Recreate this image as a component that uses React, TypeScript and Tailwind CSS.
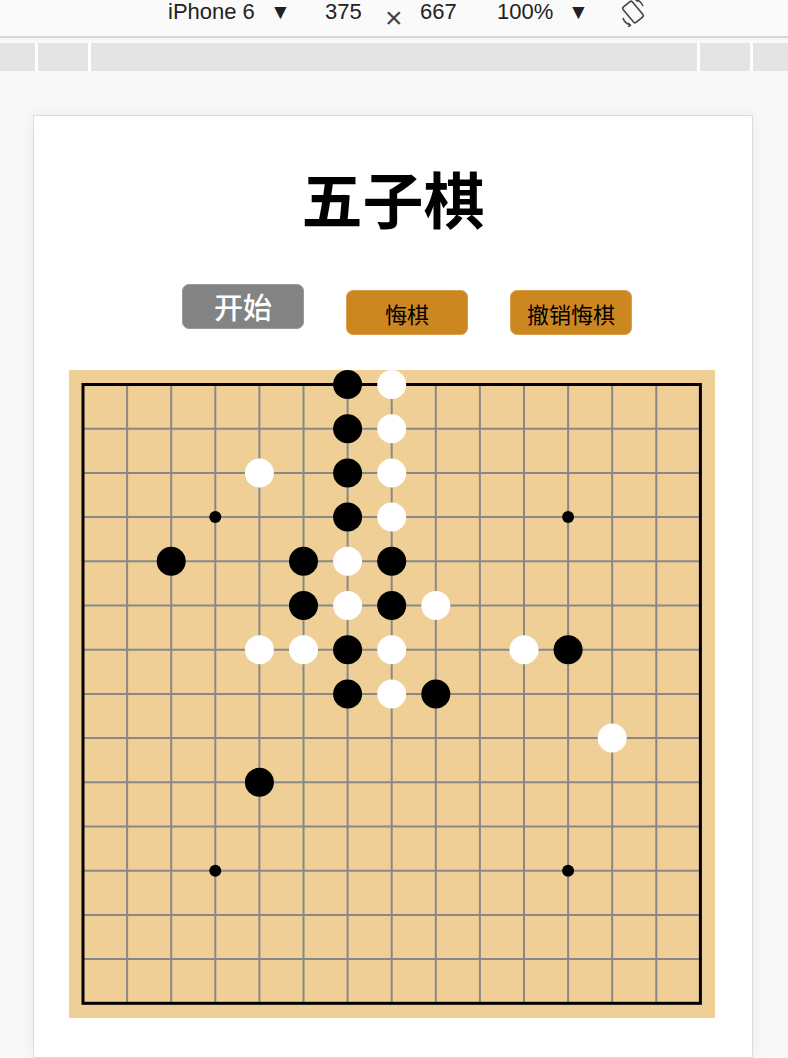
import React from 'react';

type Stone = [number, number, 'b' | 'w'];

// board geometry (px inside the svg)
const OX = 14;
const OY = 14.5;
const SX = 44.1;
const SY = 44.2;
const N = 15;

const stones: Stone[] = [
  [6, 0, 'b'], [7, 0, 'w'],
  [6, 1, 'b'], [7, 1, 'w'],
  [4, 2, 'w'], [6, 2, 'b'], [7, 2, 'w'],
  [6, 3, 'b'], [7, 3, 'w'],
  [2, 4, 'b'], [5, 4, 'b'], [6, 4, 'w'], [7, 4, 'b'],
  [5, 5, 'b'], [6, 5, 'w'], [7, 5, 'b'], [8, 5, 'w'],
  [4, 6, 'w'], [5, 6, 'w'], [6, 6, 'b'], [7, 6, 'w'], [10, 6, 'w'], [11, 6, 'b'],
  [6, 7, 'b'], [7, 7, 'w'], [8, 7, 'b'],
  [12, 8, 'w'],
  [4, 9, 'b'],
];

const stars: [number, number][] = [[3, 3], [11, 3], [3, 11], [11, 11]];

function RotateIcon() {
  return (
    <svg width="30" height="28" viewBox="0 0 30 28" fill="none" stroke="#444" strokeWidth="1.6">
      <rect x="9" y="3" width="12" height="20" rx="2" transform="rotate(-40 15 13)" />
      <path d="M5 19 A11 11 0 0 0 12 26" />
      <path d="M25 7 A11 11 0 0 0 18 0.5" />
      <path d="M10 24 L12.4 26.2 L10.2 28" />
      <path d="M20 2.5 L17.6 0.6 L19.6 -1" />
    </svg>
  );
}

function Board() {
  const w = 646;
  const h = 648;
  const right = OX + SX * (N - 1);
  const bottom = OY + SY * (N - 1);
  const idx = Array.from({ length: N }, (_, i) => i);
  return (
    <svg width={w} height={h} className="block bg-[#efcf96]">
      {idx.map((i) => (
        <line key={'v' + i} x1={OX + SX * i} y1={OY} x2={OX + SX * i} y2={bottom} stroke="#888" strokeWidth="2" />
      ))}
      {idx.map((i) => (
        <line key={'h' + i} x1={OX} y1={OY + SY * i} x2={right} y2={OY + SY * i} stroke="#888" strokeWidth="2" />
      ))}
      <rect x={OX} y={OY} width={right - OX} height={bottom - OY} fill="none" stroke="#000" strokeWidth="3" />
      {stars.map(([c, r]) => (
        <circle key={'s' + c + '-' + r} cx={OX + SX * c} cy={OY + SY * r} r="6" fill="#000" />
      ))}
      {stones.map(([c, r, color]) => (
        <circle
          key={c + '-' + r}
          cx={OX + SX * c}
          cy={OY + SY * r}
          r="14.5"
          fill={color === 'b' ? '#000' : '#fff'}
        />
      ))}
    </svg>
  );
}

export default function App() {
  return (
    <div className="w-[788px] h-[1058px] overflow-hidden flex flex-col bg-[#f8f8f8] font-['Liberation_Sans','DejaVu_Sans',sans-serif]">
      {/* devtools device bar */}
      <div className="h-[38px] shrink-0 bg-[#fafafa] border-b-2 border-[#d6d6d6] flex items-start pl-[168px] text-[22px] leading-[24px] text-[#222]">
        <span className="w-[102px]">iPhone 6</span>
        <span className="w-[55px] text-[21px] leading-[24px]">▼</span>
        <span className="w-[60px]">375</span>
        <span className="w-[35px] text-[30px] leading-[24px] text-[#444] pt-[6px]">×</span>
        <span className="w-[77px]">667</span>
        <span className="w-[71px]">100%</span>
        <span className="w-[50px] text-[21px] leading-[24px]">▼</span>
        <span className="-mt-[1px]">
          <RotateIcon />
        </span>
      </div>

      {/* media query ruler */}
      <div className="mt-[5px] h-[28px] shrink-0 flex gap-[3px] bg-white">
        <div className="w-[35px] bg-[#e4e4e4]" />
        <div className="w-[50px] bg-[#e4e4e4]" />
        <div className="flex-1 bg-[#e4e4e4]" />
        <div className="w-[50px] bg-[#e4e4e4]" />
        <div className="w-[35px] bg-[#e4e4e4]" />
      </div>

      {/* emulated page */}
      <div className="ml-[33px] mr-[35px] mt-[44px] flex-1 bg-white border border-[#dcdcdc] shadow-[0_0_14px_rgba(0,0,0,0.06)] font-['Noto_Sans_CJK_SC',sans-serif]">
        <h1 className="pt-[52px] text-center text-[61px] leading-[60px] font-bold text-black">五子棋</h1>

        <div className="mt-[56px] flex items-start pl-[148px] gap-[42px]">
          <button className="w-[122px] h-[45px] rounded-[7px] bg-[#838383] border border-[#9a9a9a] text-white text-[29px] font-medium leading-none">
            开始
          </button>
          <button className="mt-[6px] w-[122px] h-[45px] rounded-[7px] bg-[#cc8720] border border-[#dca04a] text-black text-[22px] leading-none">
            悔棋
          </button>
          <button className="mt-[6px] w-[122px] h-[45px] rounded-[7px] bg-[#cc8720] border border-[#dca04a] text-black text-[22px] leading-none">
            撤销悔棋
          </button>
        </div>

        <div className="mt-[35px] ml-[35px]">
          <Board />
        </div>
      </div>
    </div>
  );
}
